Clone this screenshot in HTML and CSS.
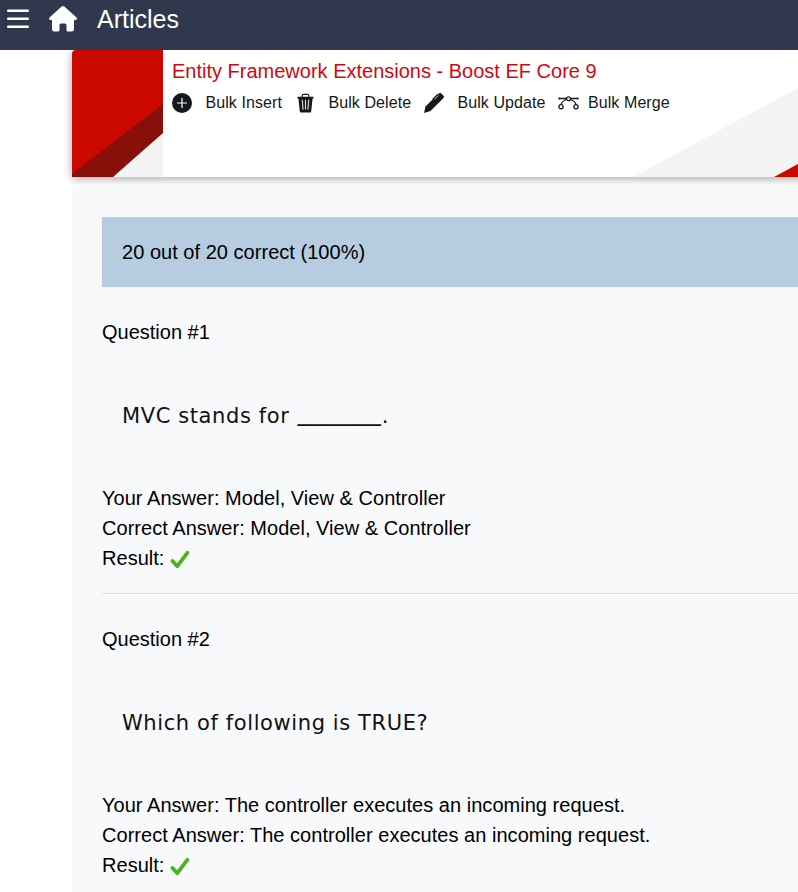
FILE: index.html
```
<!DOCTYPE html>
<html lang="en">
<head>
<meta charset="utf-8">
<title>Articles</title>
<link rel="stylesheet" href="styles.css">
</head>
<body>
<header class="topbar">
  <svg class="menu" viewBox="0 0 22 20"><path d="M1.3 1.7H20.7M1.3 9.7H20.7M1.3 17.7H20.7"/></svg>
  <svg class="home" viewBox="0 0 28 26"><path d="M14 0Q14.700 0 15.300 .5L27.300 11.300Q28.700 12.900 27 14H25V23Q25 25.500 22.500 25.500H19Q17.500 25.500 17.500 24V19Q17.500 17.500 16 17.500H12Q10.500 17.500 10.500 19V24Q10.500 25.500 9 25.500H5.500Q3 25.500 3 23V14H1Q-.7 12.900 .7 11.300L12.700 .5Q13.300 0 14 0Z"/></svg>
  <span class="brand">Articles</span>
</header>
<main class="page">
  <section class="banner">
    <svg class="stripe" viewBox="0 0 91 127"><path fill="#f4f4f4" d="M0 0H91V127H0Z"/><path fill="#890f0b" d="M0 50H91V83L41 127H0Z"/><path fill="#ca0800" d="M0 0H91V54L0 124Z"/></svg>
    <div class="promo">
      <h1>Entity Framework Extensions - Boost EF Core 9</h1>
      <ul class="features">
        <li class="insert"><svg viewBox="0 0 20 20"><circle cx="10" cy="10" r="10" fill="#14181b"/><path d="M10 5V15M5 10H15" stroke="#fff" stroke-width="1.2"/></svg><span>Bulk Insert</span></li>
        <li class="delete"><svg viewBox="0 0 18 20"><path d="M5.500 4V2Q5.500 .8 7 .8H11Q12.500 .8 12.500 2V4" fill="none" stroke="#14181b" stroke-width="1.200"/><path fill="#14181b" d="M.5 3.300H17.500V5.300H16.500L15 19Q14.800 20 13.800 20H4.200Q3.200 20 3 19L1.500 5.300H.5Z"/><path d="M5.600 6.500L6.400 17M9 6.500V17M12.400 6.500L11.600 17" stroke="#ddd" stroke-width="1.200"/></svg><span>Bulk Delete</span></li>
        <li class="update"><svg viewBox="0 0 20 20"><path fill="#14181b" d="M0 20L1.500 13.500 10 5 15 .3Q16.200-.5 17.300 .5L19.500 2.700Q20.500 3.800 19.500 5L6.500 18Z"/><path d="M8.800 6.200L13.300 1.800 15.500 3.500" fill="none" stroke="#14181b" stroke-width="1.200"/><path d="M10.300 6.200L14.400 2.400" stroke="#fff" stroke-width=".8"/></svg><span>Bulk Update</span></li>
        <li class="merge"><svg viewBox="0 0 21 14"><g fill="none" stroke="#14181b" stroke-width="1.300"><path d="M1 2.500H8.500M12.500 2.500H20M8.600 3.500Q4 5 3 8.500M12.400 3.500Q17 5 18 8.500"/><circle cx="10.500" cy="2.700" r="1.900"/><circle cx="3" cy="10.800" r="2.100"/><circle cx="18" cy="10.800" r="2.100"/></g><circle cx="1.200" cy="2.500" r="1" fill="#14181b"/><circle cx="19.800" cy="2.500" r="1" fill="#14181b"/></svg><span>Bulk Merge</span></li>
      </ul>
    </div>
    <svg class="corner" viewBox="0 0 165 90"><path fill="#f4f4f4" d="M0 90L165 1V90Z"/><path fill="#ca0800" d="M141 90L165 77V90Z"/></svg>
  </section>
  <section class="results">
    <div class="score"><span>20 out of 20 correct (100%)</span></div>
    <article>
      <p class="number"><span>Question #1</span></p>
      <p class="question">MVC stands for <span class="blank">______</span>.</p>
      <div class="answers">
        <p>Your Answer: Model, View &amp; Controller</p>
        <p>Correct Answer: Model, View &amp; Controller</p>
        <p>Result: <svg class="check" viewBox="0 0 20 20"><path d="M2.500 11L7.300 16.200 17.300 2.800"/></svg></p>
      </div>
    </article>
    <hr>
    <article>
      <p class="number"><span>Question #2</span></p>
      <p class="question">Which of following is TRUE?</p>
      <div class="answers">
        <p>Your Answer: The controller executes an incoming request.</p>
        <p>Correct Answer: The controller executes an incoming request.</p>
        <p>Result: <svg class="check" viewBox="0 0 20 20"><path d="M2.500 11L7.300 16.200 17.300 2.800"/></svg></p>
      </div>
    </article>
  </section>
</main>
</body>
</html>
```
FILE: styles.css
```
* { box-sizing: border-box; margin: 0; padding: 0; }
html, body { height: 892px; overflow: hidden; }
body { background: #fff; color: #000; font: 20px/30px "Liberation Sans", Arial, sans-serif; }
.topbar { height: 50px; background: #30384d; display: flex; align-items: flex-start; position: relative; z-index: 1; }
.menu { width: 22px; height: 20px; margin: 9px 0 0 7px; }
.menu path { stroke: #fff; stroke-width: 2.600; stroke-linecap: round; }
.home { width: 28px; height: 26px; margin: 6px 0 0 20px; fill: #fff; }
.brand { color: #fff; font-size: 25px; line-height: 30px; margin: 4px 0 0 20px; white-space: nowrap; }
.page { margin-left: 72px; }
.banner { height: 127px; display: flex; background: #fff; position: relative; border-radius: 4px 0 0 0; box-shadow: 0 2px 10px rgba(0, 0, 0, .35); margin-right: -20px; }
.stripe { width: 91px; height: 127px; flex: none; border-radius: 4px 0 0 0; }
.promo { padding: 6px 0 0 9px; white-space: nowrap; }
h1 { font-size: 20px; line-height: 30px; font-weight: 400; color: #ce0811; }
.features { display: flex; list-style: none; font-size: 16px; line-height: 24px; letter-spacing: .08px; color: #14181b; padding-top: 5px; }
.features li { display: flex; align-items: center; }
.features svg { flex: none; height: 20px; }
.insert { width: 125px; }
.insert svg { width: 20px; margin-right: 13.500px; }
.delete { width: 127px; }
.delete svg { width: 17px; margin-right: 14.500px; }
.update { width: 134px; }
.update svg { width: 20px; margin-right: 13.500px; }
.merge svg { width: 21px; margin-right: 9px; }
.corner { position: absolute; right: 20px; bottom: 0; width: 165px; height: 90px; }
.results { margin-top: 10px; background: #f8f9fb; height: 705px; padding: 30px 0 0 30px; position: relative; }
.score { height: 70px; padding: 20px; background: #b6cce1; letter-spacing: .03px; }
.number { margin-top: 30px; }
.answers { letter-spacing: .03px; }
.question { font-family: "DejaVu Sans", Verdana, sans-serif; font-size: 21px; letter-spacing: .6px; color: #111; padding: 54px 20px 52px; line-height: 30px; white-space: nowrap; }
.blank { font: 24.900px/1 "Liberation Sans", Arial, sans-serif; letter-spacing: 0; vertical-align: 2px; line-height: 0; margin: 0 1px; }
hr { border: 0; border-top: 1px solid #dee0e2; margin-top: 20px; }
.check { width: 20px; height: 20px; vertical-align: -5px; }
.check path { fill: none; stroke: #4ab31d; stroke-width: 3.800; stroke-linecap: round; stroke-linejoin: round; }
```
